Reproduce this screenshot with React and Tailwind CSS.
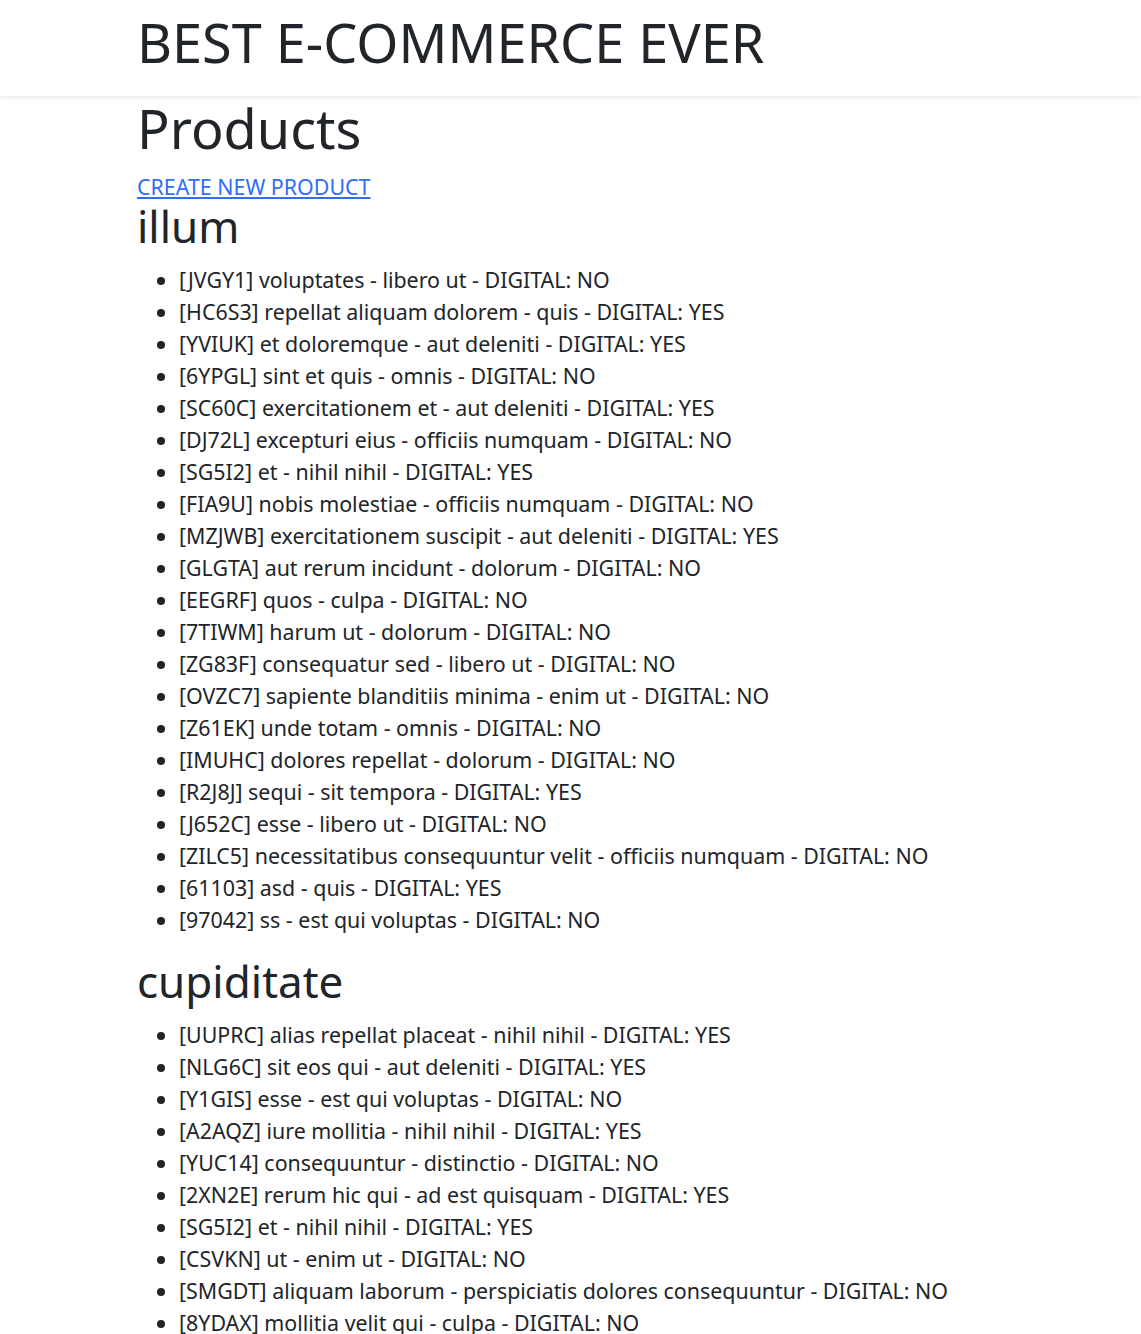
import React from "react";

const groups = [
  {
    name: "illum",
    items: [
      "[JVGY1] voluptates - libero ut - DIGITAL: NO",
      "[HC6S3] repellat aliquam dolorem - quis - DIGITAL: YES",
      "[YVIUK] et doloremque - aut deleniti - DIGITAL: YES",
      "[6YPGL] sint et quis - omnis - DIGITAL: NO",
      "[SC60C] exercitationem et - aut deleniti - DIGITAL: YES",
      "[DJ72L] excepturi eius - officiis numquam - DIGITAL: NO",
      "[SG5I2] et - nihil nihil - DIGITAL: YES",
      "[FIA9U] nobis molestiae - officiis numquam - DIGITAL: NO",
      "[MZJWB] exercitationem suscipit - aut deleniti - DIGITAL: YES",
      "[GLGTA] aut rerum incidunt - dolorum - DIGITAL: NO",
      "[EEGRF] quos - culpa - DIGITAL: NO",
      "[7TIWM] harum ut - dolorum - DIGITAL: NO",
      "[ZG83F] consequatur sed - libero ut - DIGITAL: NO",
      "[OVZC7] sapiente blanditiis minima - enim ut - DIGITAL: NO",
      "[Z61EK] unde totam - omnis - DIGITAL: NO",
      "[IMUHC] dolores repellat - dolorum - DIGITAL: NO",
      "[R2J8J] sequi - sit tempora - DIGITAL: YES",
      "[J652C] esse - libero ut - DIGITAL: NO",
      "[ZILC5] necessitatibus consequuntur velit - officiis numquam - DIGITAL: NO",
      "[61103] asd - quis - DIGITAL: YES",
      "[97042] ss - est qui voluptas - DIGITAL: NO",
    ],
  },
  {
    name: "cupiditate",
    items: [
      "[UUPRC] alias repellat placeat - nihil nihil - DIGITAL: YES",
      "[NLG6C] sit eos qui - aut deleniti - DIGITAL: YES",
      "[Y1GIS] esse - est qui voluptas - DIGITAL: NO",
      "[A2AQZ] iure mollitia - nihil nihil - DIGITAL: YES",
      "[YUC14] consequuntur - distinctio - DIGITAL: NO",
      "[2XN2E] rerum hic qui - ad est quisquam - DIGITAL: YES",
      "[SG5I2] et - nihil nihil - DIGITAL: YES",
      "[CSVKN] ut - enim ut - DIGITAL: NO",
      "[SMGDT] aliquam laborum - perspiciatis dolores consequuntur - DIGITAL: NO",
      "[8YDAX] mollitia velit qui - culpa - DIGITAL: NO",
    ],
  },
];

export default function App() {
  return (
    <div
      className="min-h-screen bg-white text-[#212529]"
      style={{ fontFamily: '"Noto Sans", "Open Sans", sans-serif' }}
    >
      <header className="shadow-[0_2px_4px_rgba(0,0,0,0.08)]">
        <div className="px-[137px] h-[96px] pt-[15px]">
          <h1 className="text-[54px] leading-[54px] font-normal">BEST E-COMMERCE EVER</h1>
        </div>
      </header>
      <main className="px-[137px]">
        <h2 className="text-[54px] leading-[64px] mb-[13px]">Products</h2>
        <div className="text-[21.4px] leading-[27px]">
          <a href="#" className="text-[#2f6ef8] underline">
            CREATE NEW PRODUCT
          </a>
        </div>
        {groups.map((g) => (
          <section key={g.name} className="mb-[19px]">
            <h3 className="text-[44px] leading-[53px]">{g.name}</h3>
            <ul className="list-disc pl-[42px] mt-[11px] text-[21.4px] leading-[32px]">
              {g.items.map((it, i) => (
                <li key={i}>{it}</li>
              ))}
            </ul>
          </section>
        ))}
      </main>
    </div>
  );
}
